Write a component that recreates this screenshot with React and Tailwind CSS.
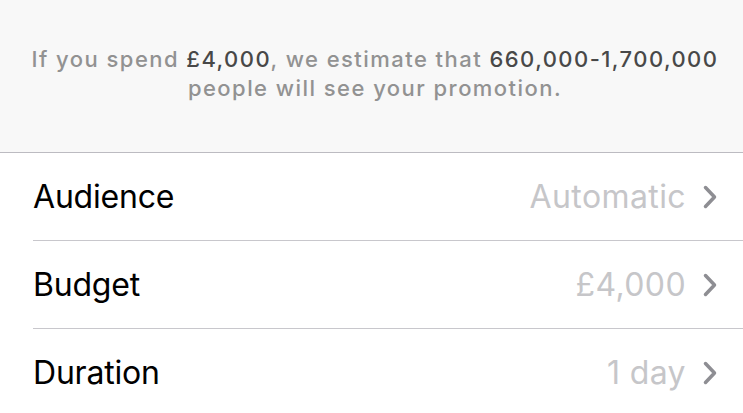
import React from "react";

function Chevron() {
  return (
    <svg width="14" height="24" viewBox="0 0 14 24" className="ml-[17px] shrink-0">
      <path d="M2.5 2.5 L11.5 12 L2.5 21.5" fill="none" stroke="#8e8e93" strokeWidth="3.5" strokeLinecap="round" strokeLinejoin="round" />
    </svg>
  );
}

function Row({ label, value, last }) {
  return (
    <div className="pl-[33px]">
      <div className={"flex h-[88px] items-center pr-[26px] " + (last ? "" : "border-b border-[#c8c7cc]")}>
        <span className="text-[32px] text-black leading-none tracking-[-0.2px]">{label}</span>
        <span className="ml-auto text-[32px] text-[#c6c6c9] leading-none tracking-[0.4px]">{value}</span>
        <Chevron />
      </div>
    </div>
  );
}

export default function App() {
  return (
    <div className="w-[743px] h-[413px] overflow-hidden bg-white" style={{ fontFamily: "Inter, 'Noto Sans', sans-serif" }}>
      <div className="h-[153px] bg-[#f8f8f8] border-b border-[#bcbbc1] flex flex-col items-center pt-[45px] pl-[7px]">
        <p className="text-center text-[22px] leading-[29px] font-medium text-[#929292] tracking-[1.45px] whitespace-nowrap">
          If you spend <span className="text-[#484848]">£4,000</span>, we estimate that <span className="text-[#484848]">660,000-1,700,000</span>
          <br />
          people will see your promotion.
        </p>
      </div>
      <Row label="Audience" value="Automatic" />
      <Row label="Budget" value="£4,000" />
      <Row label="Duration" value="1 day" last />
    </div>
  );
}
